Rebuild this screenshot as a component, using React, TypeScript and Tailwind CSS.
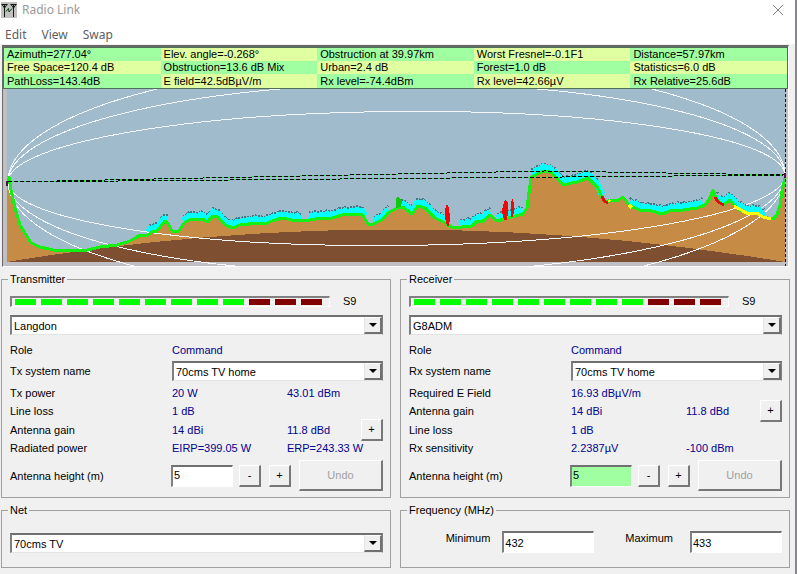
import React, { useState } from 'react';
import clsx from 'clsx';

type Point = [number, number];

interface StationRow {
  label: string;
  value: string;
  extra?: string;
  expand?: boolean;
}

interface Station {
  id: string;
  title: string;
  site: string;
  systemLabel: string;
  rows: StationRow[];
  highlight?: boolean;
}

const STATS = [
  ['Azimuth=277.04°', 'Elev. angle=-0.268°', 'Obstruction at 39.97km', 'Worst Fresnel=-0.1F1', 'Distance=57.97km'],
  ['Free Space=120.4 dB', 'Obstruction=13.6 dB Mix', 'Urban=2.4 dB', 'Forest=1.0 dB', 'Statistics=6.0 dB'],
  ['PathLoss=143.4dB', 'E field=42.5dBµV/m', 'Rx level=-74.4dBm', 'Rx level=42.66µV', 'Rx Relative=25.6dB'],
];

const STATIONS: Station[] = [
  {
    id: 'tx',
    title: 'Transmitter',
    site: 'Langdon',
    systemLabel: 'Tx system name',
    rows: [
      { label: 'Tx power', value: '20 W', extra: '43.01 dBm' },
      { label: 'Line loss', value: '1 dB' },
      { label: 'Antenna gain', value: '14 dBi', extra: '11.8 dBd', expand: true },
      { label: 'Radiated power', value: 'EIRP=399.05 W', extra: 'ERP=243.33 W' },
    ],
  },
  {
    id: 'rx',
    title: 'Receiver',
    site: 'G8ADM',
    systemLabel: 'Rx system name',
    highlight: true,
    rows: [
      { label: 'Required E Field', value: '16.93 dBµV/m' },
      { label: 'Antenna gain', value: '14 dBi', extra: '11.8 dBd', expand: true },
      { label: 'Line loss', value: '1 dB' },
      { label: 'Rx sensitivity', value: '2.2387µV', extra: '-100 dBm' },
    ],
  },
];

const TERRAIN: Point[] = [
  [8, 178], [9, 177], [11, 190], [15, 208], [20, 225], [25, 233], [31, 243], [40, 247], [53, 250], [67, 251],
  [73, 250], [83, 251], [100, 247], [117, 245], [130, 241], [140, 235], [148, 235], [153, 231], [157, 231],
  [165, 221], [168, 223], [172, 231], [178, 232], [185, 222], [192, 219], [197, 220], [203, 219], [207, 222],
  [213, 216], [218, 217], [225, 225], [233, 228], [240, 225], [257, 223], [265, 224], [272, 221], [282, 218],
  [292, 220], [305, 221], [315, 219], [332, 218], [342, 215], [362, 214], [368, 224], [373, 224], [382, 220],
  [388, 213], [397, 208], [403, 207], [412, 214], [418, 206], [425, 208], [435, 218], [445, 223], [452, 227],
  [462, 227], [472, 226], [477, 221], [483, 221], [490, 215], [497, 221], [508, 218], [523, 214], [527, 208],
  [531, 177], [543, 171], [550, 172], [557, 178], [563, 185], [577, 182], [588, 178], [598, 188], [602, 198],
  [607, 202], [610, 200], [617, 201], [623, 197], [630, 206], [640, 210], [652, 211], [662, 214], [670, 211],
  [683, 210], [697, 208], [705, 205], [710, 198], [713, 190], [717, 200], [723, 205], [730, 200], [737, 208],
  [748, 214], [757, 213], [763, 217], [773, 219], [777, 215], [780, 205], [782, 191], [785, 178],
];

// stretches of the path with buildings on them, in chart x
const CLUTTER: Point[] = [
  [148, 169], [183, 302], [309, 365], [374, 388], [401, 446], [460, 491], [497, 524], [531, 603], [630, 703], [717, 765],
];

const toPath = (points: Point[], lift = 0) =>
  points.map(([x, y], i) => `${i ? 'L' : 'M'}${x} ${y - lift}`).join(' ');

const heightAt = (x: number) => {
  const i = Math.max(1, TERRAIN.findIndex(([px]) => px >= x));
  const [x0, y0] = TERRAIN[i - 1];
  const [x1, y1] = TERRAIN[i];
  return y0 + ((y1 - y0) * (x - x0)) / (x1 - x0);
};

// rooftops are uneven, so every third sample stands one pixel higher
const rooftops = ([from, to]: Point): Point[] => {
  const points: Point[] = [];
  for (let x = from; x <= to; x += 2) {
    points.push([x, Math.round(heightAt(x)) - (x % 3 === 0 ? 1 : 0)]);
  }
  return points;
};

function PathProfile() {
  return (
    <svg
      viewBox="3 89 785 177"
      preserveAspectRatio="none"
      shapeRendering="crispEdges"
      className="block h-[177px] w-full"
      role="img"
      aria-label="Path profile"
    >
      <rect x="3" y="89" width="785" height="177" fill="#c0c0c4" />
      <rect x="7" y="89" width="779" height="173" fill="#a0bccc" />
      <path d={`${toPath(TERRAIN)} L785 262 L7 262 L7 178 Z`} fill="#c68b45" />
      <path d="M7 262 Q396 197 785 262 Z" fill="#7f4f32" />

      <g fill="none" stroke="#f4f8fa" transform="rotate(-0.5 396.5 178.5)">
        <ellipse cx="396.5" cy="178.5" rx="388.5" ry="67" />
        <ellipse cx="396.5" cy="178.5" rx="388.5" ry="94.8" />
        <ellipse cx="396.5" cy="178.5" rx="388.5" ry="116" />
      </g>

      <g fill="none">
        {CLUTTER.map((range) => (
          <g key={range[0]}>
            <path d={toPath(rooftops(range), 7)} stroke="#3c7c88" strokeWidth="2" strokeDasharray="2 1" />
            <path d={toPath(rooftops(range), 3)} stroke="#00ffff" strokeWidth="6" />
          </g>
        ))}
        <path d={toPath(TERRAIN)} stroke="#14f014" strokeWidth="3" strokeLinejoin="round" />
        <path d="M602 196 L604 201 L608 203" stroke="#e01010" strokeWidth="3" />
        <path d="M715 197 L718 202 L724 205" stroke="#e01010" strokeWidth="3" />
        <path d="M629 205 L632 208 M734 206 L741 210 L748 214 L757 213 L763 217 L771 219" stroke="#ffff00" strokeWidth="3" />
        <path d="M608 202 L610 200" stroke="#ffff00" strokeWidth="2" />
      </g>

      <path d="M398 196 L402 201 L401 207 L396 208 L396 199 Z" fill="#10c810" />
      <g fill="#f00808">
        <path d="M447 204 L449 208 L450 218 L449 226 L447 226 L445 218 L445 209 Z" />
        <path d="M505 200 L508 202 L508 212 L507 220 L504 220 L502 212 L503 205 Z" />
        <path d="M512 198 L514 203 L514 211 L513 217 L511 217 L511 204 Z" />
      </g>

      <g fill="none" strokeWidth="1">
        <path d="M8 182 L545 171 L785 175" stroke="#30e050" />
        <path d="M8 182 L785 175" stroke="#30e050" />
        <path d="M8 182 L545 171 L785 175" stroke="#000000" strokeDasharray="4 2" />
        <path d="M8 182 L785 175" stroke="#000000" strokeDasharray="4 2" />
        <path d="M785.5 89 V266" stroke="#0000c0" strokeDasharray="3 2" />
      </g>
      <rect x="6" y="181" width="2" height="5" fill="#501050" />
      <rect x="784" y="173" width="2" height="5" fill="#501050" />
    </svg>
  );
}

function StatsTable() {
  return (
    <table className="w-full table-fixed border-collapse">
      <tbody>
        {STATS.map((row, r) => (
          <tr key={row[0]} className="h-[13px] last:h-[14px]">
            {row.map((text, c) => (
              <td
                key={text}
                className={clsx('py-0 pl-[3px] leading-[13px]', (r + c) % 2 ? 'bg-[#e0ffa0]' : 'bg-[#a0ffa0]')}
              >
                {text}
              </td>
            ))}
          </tr>
        ))}
      </tbody>
    </table>
  );
}

function GroupBox({ title, className, children }: { title: string; className?: string; children: React.ReactNode }) {
  return (
    <fieldset className={clsx('min-w-0 border border-[#a0a0a0] pr-[7px] pl-2', className)}>
      <legend className="-ml-0.5 px-0.5 leading-[14px]">{title}</legend>
      {children}
    </fieldset>
  );
}

function ComboBox({ id, label, value }: { id: string; label?: string; value: string }) {
  return (
    <div className="relative w-full">
      <select
        id={id}
        aria-label={label}
        className="block h-5 w-full appearance-none rounded-none border-t-2 border-r border-b border-l-2 border-t-[#707070] border-r-[#808080] border-b-[#e3e3e3] border-l-[#808080] bg-white pr-5 pl-0.5 leading-4 outline-none"
      >
        <option>{value}</option>
      </select>
      <span className="pointer-events-none absolute top-0.5 right-px bottom-px flex w-[18px] items-center justify-center border-t border-r-2 border-b-2 border-l border-t-white border-r-[#707070] border-b-[#707070] border-l-[#e3e3e3] bg-[#f0f0f0]">
        <svg viewBox="0 0 8 4" className="h-1 w-2" aria-hidden="true">
          <path d="M0 0 H8 L4 4 Z" fill="#000000" />
        </svg>
      </span>
    </div>
  );
}

function PushButton({ label, className, disabled, children }: { label?: string; className: string; disabled?: boolean; children: React.ReactNode }) {
  return (
    <button
      type="button"
      aria-label={label}
      disabled={disabled}
      className={clsx(
        'shrink-0 border-t border-r-2 border-b-2 border-l border-t-white border-r-[#787878] border-b-[#787878] border-l-white bg-[#f0f0f0] leading-none disabled:text-[#a0a0a0]',
        className,
      )}
    >
      {children}
    </button>
  );
}

function TextBox({ id, initial, className }: { id: string; initial: string; className: string }) {
  const [value, setValue] = useState(initial);
  return (
    <input
      id={id}
      type="text"
      value={value}
      onChange={(e) => setValue(e.target.value)}
      className={clsx(
        'h-[22px] border-t-2 border-r border-b border-l-2 border-t-[#707070] border-r-white border-b-white border-l-[#808080] pl-px outline-none',
        className,
      )}
    />
  );
}

function SignalMeter({ name }: { name: string }) {
  return (
    <div className="flex items-center gap-[13px]">
      <div
        role="meter"
        aria-label={`${name} signal`}
        aria-valuemin={0}
        aria-valuemax={12}
        aria-valuenow={9}
        className="flex h-[11px] gap-[5px] border-t-2 border-r border-b border-l-2 border-t-[#808080] border-r-white border-b-white border-l-[#808080] pt-px pr-[7px] pl-[3px]"
      >
        {Array.from({ length: 12 }, (_, i) => (
          <span key={i} className={clsx('h-1.5 w-[21px]', i < 9 ? 'bg-[#00ff00]' : 'bg-[#800000]')} />
        ))}
      </div>
      <span className="leading-[11px]">S9</span>
    </div>
  );
}

function StationPanel({ station }: { station: Station }) {
  const { id, title, site, systemLabel, rows, highlight } = station;
  return (
    <GroupBox title={title} className="pt-2.5 pb-1.5">
      <SignalMeter name={title} />
      <div className="mt-2">
        <ComboBox id={`${id}-site`} label={`${title} site`} value={site} />
      </div>

      <div className="mt-1.5 grid grid-cols-[162px_115px_1fr] grid-rows-[18px_24px_19px_18px_19px_18px] items-center">
        <span>Role</span>
        <span className="col-span-2 text-[#000090]">Command</span>
        <label htmlFor={`${id}-system`}>{systemLabel}</label>
        <div className="col-span-2">
          <ComboBox id={`${id}-system`} value="70cms TV home" />
        </div>
        {rows.map((row) => (
          <React.Fragment key={row.label}>
            <span>{row.label}</span>
            <span className="text-[#000090]">{row.value}</span>
            <div className="flex items-center justify-between whitespace-nowrap text-[#000090]">
              <span>{row.extra}</span>
              {row.expand && (
                <PushButton label="Antenna details" className="-my-1 h-[22px] w-[22px] text-black">
                  +
                </PushButton>
              )}
            </div>
          </React.Fragment>
        ))}
      </div>

      <div className="mt-[3px] flex items-center">
        <label htmlFor={`${id}-height`} className="w-[161px]">
          Antenna height (m)
        </label>
        <TextBox id={`${id}-height`} initial="5" className={clsx('w-[62px] pb-0.5', highlight ? 'bg-[#a0ffa0]' : 'bg-white')} />
        <PushButton label="Lower antenna" className="ml-1.5 h-[22px] w-[22px]">
          -
        </PushButton>
        <PushButton label="Raise antenna" className="ml-2 h-[22px] w-[22px]">
          +
        </PushButton>
        <PushButton disabled className="ml-auto h-[31px] w-[84px]">
          Undo
        </PushButton>
      </div>
    </GroupBox>
  );
}

function AppIcon() {
  return (
    <svg viewBox="0 0 16 16" className="h-4 w-4" aria-hidden="true">
      <rect width="16" height="16" fill="#c0c0c0" />
      <g fill="none" stroke="#101810">
        <path d="M0.5 2.5 H6.5 M3.5 2 V15 M1 2.5 L3.5 6 L6 2.5" />
        <path d="M9.5 2.5 H15.5 M12.5 2 V15 M10 2.5 L12.5 6 L15 2.5" />
        <path d="M5 9.5 L7.5 6.5 L8 10 L11 6.5" stroke="#104010" />
      </g>
    </svg>
  );
}

export default function App() {
  return (
    <div className="min-h-screen border-r-2 border-[#88888c] bg-[#f0f0f0] font-['Liberation_Sans',Arial,sans-serif] text-[11px] leading-[14px] text-black">
      <header className="bg-white font-['Noto_Sans','Open_Sans',sans-serif] text-[12px]">
        <div className="flex items-center justify-between pt-0.5 pr-3 pl-px">
          <div className="flex items-center gap-[5px]">
            <AppIcon />
            <h1 className="leading-4 text-[#999999]">Radio Link</h1>
          </div>
          <button type="button" aria-label="Close">
            <svg viewBox="0 0 10 10" className="h-2.5 w-2.5" aria-hidden="true">
              <path d="M0 0 L10 10 M10 0 L0 10" stroke="#808080" />
            </svg>
          </button>
        </div>
        <nav className="flex gap-[15px] pt-[9px] pb-px pl-[5px] leading-4 text-[#606060]">
          <button type="button">Edit</button>
          <button type="button">View</button>
          <button type="button">Swap</button>
        </nav>
      </header>

      <main className="pt-px pr-[5px] pb-1.5 pl-px">
        <section className="mr-px ml-px border-t-2 border-r border-b border-l border-t-[#696969] border-r-white border-b-white border-l-[#696969]">
          <div className="border border-[#50705c]">
            <StatsTable />
          </div>
          <PathProfile />
        </section>

        <div className="mt-[5px] grid grid-cols-2 gap-x-[9px] gap-y-[5px]">
          {STATIONS.map((station) => (
            <StationPanel key={station.id} station={station} />
          ))}

          <GroupBox title="Net" className="pt-4 pb-3.5">
            <ComboBox id="net" label="Net" value="70cms TV" />
          </GroupBox>

          <GroupBox title="Frequency (MHz)" className="pt-3.5 pb-3.5">
            <div className="flex items-start">
              <label htmlFor="freq-min" className="ml-auto">
                Minimum
              </label>
              <TextBox id="freq-min" initial="432" className="ml-3 w-[92px] bg-white" />
              <label htmlFor="freq-max" className="ml-[31px]">
                Maximum
              </label>
              <TextBox id="freq-max" initial="433" className="ml-[17px] w-[92px] bg-white" />
            </div>
          </GroupBox>
        </div>
      </main>
    </div>
  );
}
